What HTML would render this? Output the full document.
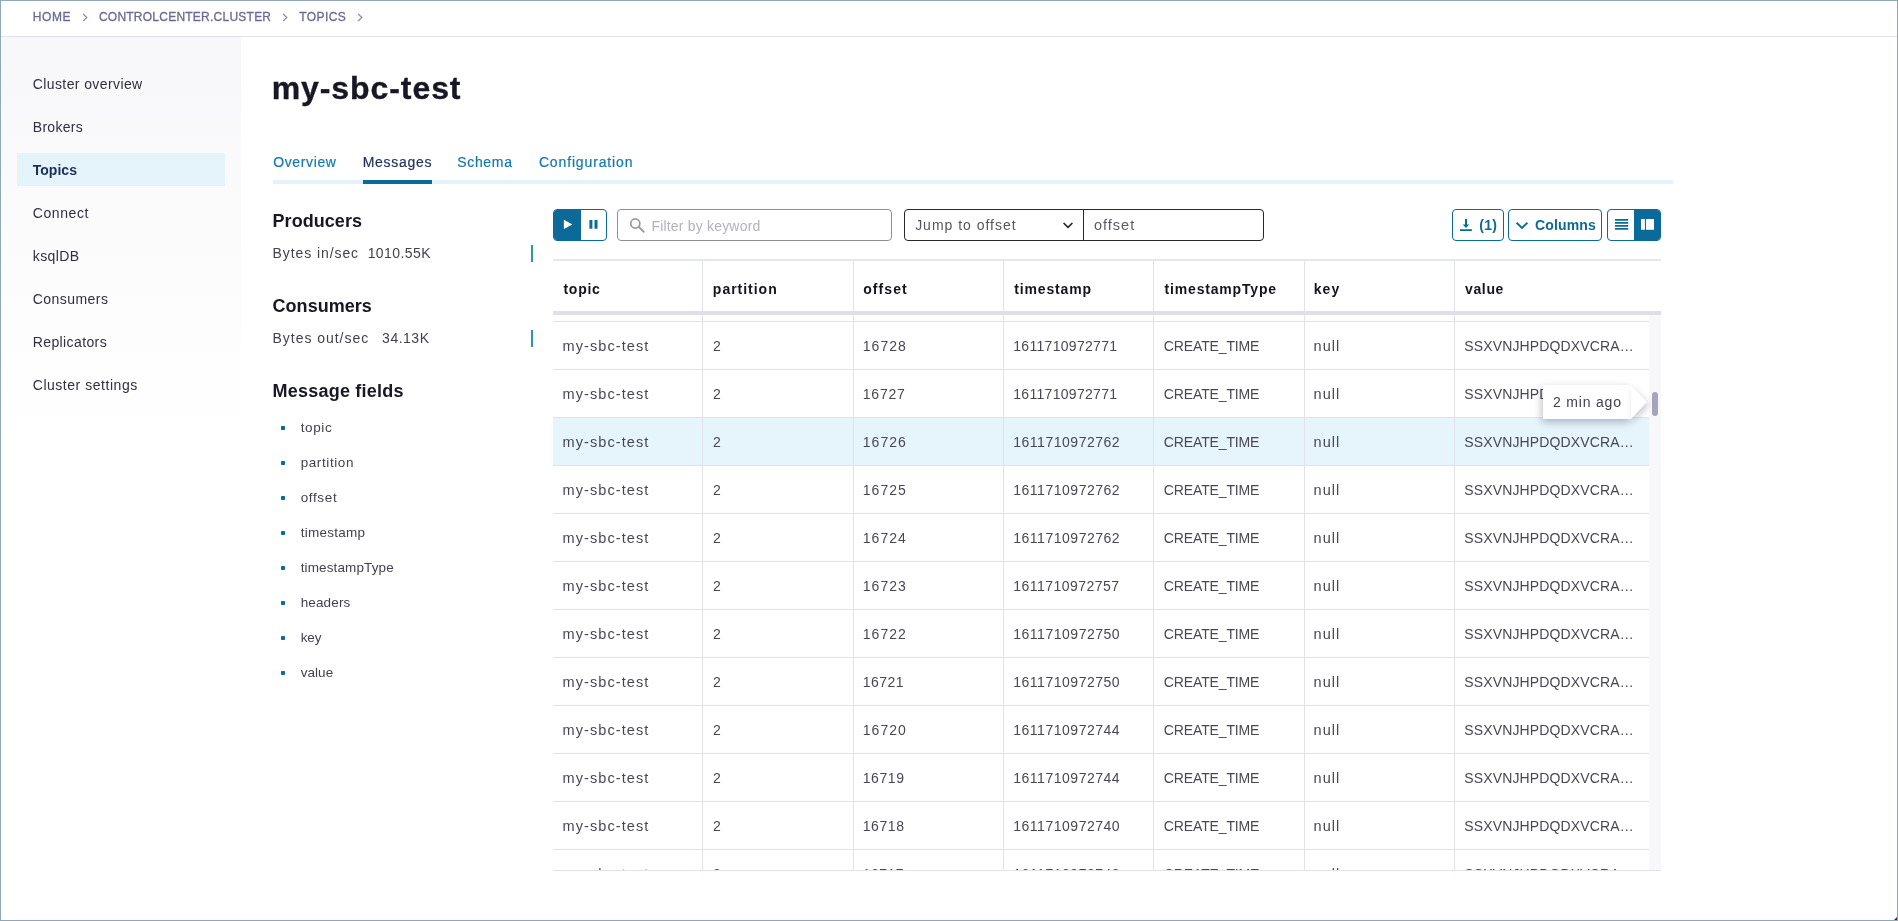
<!DOCTYPE html>
<html lang="en">
<head>
<meta charset="utf-8">
<title>my-sbc-test - Messages</title>
<style>
*{box-sizing:border-box;margin:0;padding:0}
html,body{width:1898px;height:921px;overflow:hidden;background:#fff}
body{font-family:"Liberation Sans",sans-serif;color:#2b2b3a;position:relative;will-change:transform}
.a{position:absolute}
.t{position:absolute;white-space:nowrap}
#frame{position:absolute;left:0;top:0;width:1898px;height:921px;border:1px solid #8fa7b6;z-index:50}
#corner{position:absolute;left:1893.5px;top:916.5px;width:0;height:0;border-left:3.5px solid transparent;border-bottom:3.5px solid #5a2226;z-index:51}
/* breadcrumb */
#crumbline{position:absolute;left:1px;top:36px;width:1896px;height:1px;background:#e2e2ec}
.cr{font-size:12px;line-height:14px;color:#6a6a93;-webkit-text-stroke:.3px #6a6a93}
.chev{position:absolute;top:13px;width:6px;height:9px}
/* sidebar */
#side{position:absolute;left:1px;top:37px;width:240px;height:883px;background:linear-gradient(180deg,#f8f8fa 0,#f8f8fa 30px,#fff 400px)}
#act{position:absolute;left:17px;top:153px;width:208px;height:33px;background:#e5f3fb}
.sd{font-size:14px;line-height:18px;color:#30303f}
#s3{font-weight:bold;color:#1b2f57}
/* title */
#title{font-size:32px;line-height:40px;font-weight:bold;color:#171725;-webkit-text-stroke:.35px #171725}
/* tabs */
.tab{font-size:14px;line-height:18px;color:#127aad;-webkit-text-stroke:.2px currentColor}
#tb2{color:#1f3159}
#tabline{position:absolute;left:273px;top:180px;width:1400px;height:4px;background:#e4f3fb}
#tabact{position:absolute;left:363px;top:180px;width:69px;height:4px;background:#0b6a97}
/* left panel */
.h2{font-size:18px;line-height:22px;font-weight:bold;color:#171725}
.mt{font-size:14px;line-height:18px;color:#42424e}
.spark{position:absolute;left:531px;width:2px;height:17px;background:#2c9aa6}
.fld{font-size:13.5px;line-height:16px;color:#42424e}
.bul{position:absolute;left:280.5px;width:4.5px;height:4.5px;background:#0b6a97;border-radius:.8px}
/* toolbar */
.btn{position:absolute;top:209px;height:32px;border:1px solid #0b6a97;border-radius:4px;background:#fff;overflow:hidden}
.inp{position:absolute;top:209px;height:32px;border:1px solid #8e8e98;border-radius:4px;background:#fff}
.tl{font-size:14px;line-height:18px}
.tlb{font-size:14px;line-height:18px;font-weight:bold;color:#0b6a97}
/* table */
.hline{position:absolute;left:553px;height:1px;background:#e2e2ec}
.vl{position:absolute;top:261px;width:1px;height:609px;background:#e2e2ec;z-index:4}
.th{font-size:14px;line-height:18px;font-weight:bold;color:#14141c;z-index:5}
#tblclip{position:absolute;left:0;top:315px;width:1898px;height:555px;overflow:hidden}
.row{position:absolute;left:553px;width:1096px;height:48px;border-bottom:1px solid #e2e2ec;margin-top:-315px}
.row.hl{background:#e6f4fc}
.row span{position:absolute;font-size:14px;line-height:18px;color:#484854;white-space:nowrap}
#track{position:absolute;left:1649px;top:315px;width:12px;height:555px;background:#f8f8fb}
#thumb{position:absolute;left:1652px;top:392px;width:6px;height:24px;border-radius:3px;background:#a5a5be;z-index:6}
#tip{position:absolute;left:1543px;top:385px;width:88px;height:34px;background:#fff;z-index:7;box-shadow:-1px 3px 8px rgba(0,0,30,.27)}
span.k1,span.k6,#i3{font-size:14.5px}
#tiparrow{position:absolute;left:1631px;top:385px;z-index:8;width:0;height:0;border-top:17px solid transparent;border-bottom:17px solid transparent;border-left:16px solid #fff;filter:drop-shadow(2px 3px 3px rgba(0,0,30,.2))}
#tp{font-size:14px;line-height:18px;color:#42424e;z-index:9}
/* tuned text positions */
#c1{left:32.79px;top:10.00px;letter-spacing:0.609px}
#c2{left:98.92px;top:10.00px;letter-spacing:0.239px}
#c3{left:299.37px;top:10.00px;letter-spacing:0.379px}
#s1{left:32.74px;top:75.00px;letter-spacing:0.401px}
#s2{left:32.74px;top:118.00px;letter-spacing:0.313px}
#s3{left:32.74px;top:161.00px;letter-spacing:0.030px}
#s4{left:32.74px;top:204.00px;letter-spacing:0.605px}
#s5{left:32.74px;top:247.00px;letter-spacing:0.410px}
#s6{left:32.74px;top:290.00px;letter-spacing:0.449px}
#s7{left:32.74px;top:333.00px;letter-spacing:0.390px}
#s8{left:32.74px;top:376.00px;letter-spacing:0.533px}
#title{left:271.71px;top:67.60px;letter-spacing:0.921px}
#tb1{left:273.20px;top:153.00px;letter-spacing:0.635px}
#tb2{left:362.68px;top:153.00px;letter-spacing:0.723px}
#tb3{left:457.29px;top:153.00px;letter-spacing:0.655px}
#tb4{left:538.91px;top:153.00px;letter-spacing:0.856px}
#h1{left:272.55px;top:210.00px;letter-spacing:0.052px}
#h2{left:272.55px;top:295.00px;letter-spacing:0.036px}
#h3{left:272.55px;top:380.00px;letter-spacing:0.219px}
#m1{left:272.55px;top:244.00px;letter-spacing:0.916px}
#m2{left:367.64px;top:244.00px;letter-spacing:0.441px}
#m3{left:272.55px;top:329.00px;letter-spacing:0.968px}
#m4{left:382.10px;top:329.00px;letter-spacing:0.503px}
#f1{left:300.63px;top:420.00px;letter-spacing:0.622px}
#f2{left:300.63px;top:455.00px;letter-spacing:0.598px}
#f3{left:300.63px;top:490.00px;letter-spacing:0.658px}
#f4{left:300.63px;top:525.00px;letter-spacing:0.277px}
#f5{left:300.63px;top:560.00px;letter-spacing:0.127px}
#f6{left:300.63px;top:595.00px;letter-spacing:0.157px}
#f7{left:300.63px;top:630.00px;letter-spacing:-0.098px}
#f8{left:300.63px;top:665.00px;letter-spacing:0.071px}
#i1{left:651.41px;top:217.00px;letter-spacing:0.191px}
#i2{left:915.15px;top:216.00px;letter-spacing:0.982px}
#i3{left:1093.92px;top:216.00px;letter-spacing:1.026px}
#b1{left:1479.16px;top:216.00px;letter-spacing:0.369px}
#b2{left:1535.10px;top:216.00px;letter-spacing:0.145px}
#x1{left:563.38px;top:280.00px;letter-spacing:0.770px}
#x2{left:712.87px;top:280.00px;letter-spacing:0.980px}
#x3{left:863.23px;top:280.00px;letter-spacing:1.081px}
#x4{left:1014.35px;top:280.00px;letter-spacing:0.831px}
#x5{left:1164.54px;top:280.00px;letter-spacing:0.828px}
#x6{left:1313.68px;top:280.00px;letter-spacing:1.129px}
#x7{left:1465.05px;top:280.00px;letter-spacing:0.626px}
.k1{left:9.47px;top:15.00px;letter-spacing:1.101px}
.k2{left:160.07px;top:15.00px;letter-spacing:0.500px}
.k3{left:309.76px;top:15.00px;letter-spacing:1.037px}
.k4{left:460.26px;top:15.00px;letter-spacing:0.301px}
.k5{left:610.84px;top:15.00px;letter-spacing:-0.138px}
.k6{left:760.58px;top:15.00px;letter-spacing:1.031px}
.k7{left:911.20px;top:15.00px;letter-spacing:0.151px}
#tp{left:1552.96px;top:393.00px;letter-spacing:0.812px}
</style>
</head>
<body>
<div id="crumbline"></div>
<div id="side"></div>
<div id="act"></div>

<span class="t cr" id="c1">HOME</span>
<svg class="chev" style="left:81.6px" viewBox="0 0 6 9"><path d="M1.2 1l3.6 3.5L1.2 8" fill="none" stroke="#8a8aae" stroke-width="1.2"/></svg>
<span class="t cr" id="c2">CONTROLCENTER.CLUSTER</span>
<svg class="chev" style="left:281.7px" viewBox="0 0 6 9"><path d="M1.2 1l3.6 3.5L1.2 8" fill="none" stroke="#8a8aae" stroke-width="1.2"/></svg>
<span class="t cr" id="c3">TOPICS</span>
<svg class="chev" style="left:356.6px" viewBox="0 0 6 9"><path d="M1.2 1l3.6 3.5L1.2 8" fill="none" stroke="#8a8aae" stroke-width="1.2"/></svg>

<span class="t sd" id="s1">Cluster overview</span>
<span class="t sd" id="s2">Brokers</span>
<span class="t sd" id="s3">Topics</span>
<span class="t sd" id="s4">Connect</span>
<span class="t sd" id="s5">ksqlDB</span>
<span class="t sd" id="s6">Consumers</span>
<span class="t sd" id="s7">Replicators</span>
<span class="t sd" id="s8">Cluster settings</span>

<h1 class="t" id="title">my-sbc-test</h1>

<span class="t tab" id="tb1">Overview</span>
<span class="t tab" id="tb2">Messages</span>
<span class="t tab" id="tb3">Schema</span>
<span class="t tab" id="tb4">Configuration</span>
<div id="tabline"></div>
<div id="tabact"></div>

<h2 class="t h2" id="h1">Producers</h2>
<span class="t mt" id="m1">Bytes in/sec</span>
<span class="t mt" id="m2">1010.55K</span>
<div class="spark" style="top:245px"></div>
<h2 class="t h2" id="h2">Consumers</h2>
<span class="t mt" id="m3">Bytes out/sec</span>
<span class="t mt" id="m4">34.13K</span>
<div class="spark" style="top:330px"></div>
<h2 class="t h2" id="h3">Message fields</h2>
<div class="bul" style="top:425.5px"></div><span class="t fld" id="f1">topic</span>
<div class="bul" style="top:460.5px"></div><span class="t fld" id="f2">partition</span>
<div class="bul" style="top:495.5px"></div><span class="t fld" id="f3">offset</span>
<div class="bul" style="top:530.5px"></div><span class="t fld" id="f4">timestamp</span>
<div class="bul" style="top:565.5px"></div><span class="t fld" id="f5">timestampType</span>
<div class="bul" style="top:600.5px"></div><span class="t fld" id="f6">headers</span>
<div class="bul" style="top:635.5px"></div><span class="t fld" id="f7">key</span>
<div class="bul" style="top:670.5px"></div><span class="t fld" id="f8">value</span>

<!-- toolbar -->
<div class="btn" style="left:553px;width:54px">
 <div class="a" style="left:-1px;top:-1px;width:28px;height:32px;background:#0b6a97"></div>
</div>
<svg class="a" style="left:553px;top:209px" width="54" height="32" viewBox="0 0 54 32"><path d="M10.9 10.7L19.4 15.4 10.9 20.1z" fill="#fff"/><path d="M36.4 10.9h3v8.9h-3zM41.5 10.9h3v8.9h-3z" fill="#0b6a97"/></svg>
<div class="inp" style="left:617px;width:275px"></div>
<svg class="a" style="left:617px;top:209px" width="40" height="32" viewBox="0 0 40 32"><circle cx="18.3" cy="14.5" r="4.55" fill="none" stroke="#9a9aa2" stroke-width="1.7"/><path d="M21.6 17.8l5.7 5.6" stroke="#9a9aa2" stroke-width="1.9"/></svg>
<span class="t tl" id="i1" style="color:#b2b2ba">Filter by keyword</span>
<div class="inp" style="left:904px;width:181px;border-color:#26262b;border-radius:4px 0 0 4px"></div>
<span class="t tl" id="i2" style="color:#55555f">Jump to offset</span>
<svg class="a" style="left:1062px;top:221px" width="12" height="9" viewBox="0 0 12 9"><path d="M1.6 2l4.4 4.4L10.4 2" fill="none" stroke="#26262b" stroke-width="1.7"/></svg>
<div class="inp" style="left:1083px;width:181px;border-color:#26262b;border-radius:0 4px 4px 0"></div>
<span class="t tl" id="i3" style="color:#5a5a64">offset</span>
<div class="btn" style="left:1452px;width:52px"></div>
<svg class="a" style="left:1459px;top:218px" width="14" height="14" viewBox="0 0 14 14"><path d="M6 .9h2v6H6zM3.7 6.6h6.6L7 9.9zM1 11.3h11.9v1.8H1z" fill="#0b6a97"/></svg>
<span class="t tlb" id="b1">(1)</span>
<div class="btn" style="left:1508px;width:94px"></div>
<svg class="a" style="left:1515px;top:221px" width="14" height="9" viewBox="0 0 14 9"><path d="M1.6 1.7l5.4 5.2 5.4-5.2" fill="none" stroke="#0b6a97" stroke-width="1.9"/></svg>
<span class="t tlb" id="b2">Columns</span>
<div class="btn" style="left:1607px;width:54px">
 <div class="a" style="left:26px;top:-1px;width:28px;height:32px;background:#0b6a97"></div>
</div>
<svg class="a" style="left:1607px;top:209px" width="54" height="32" viewBox="0 0 54 32"><path d="M7.9 10h13.3v1.8H7.9zM7.9 13h13.3v1.8H7.9zM7.9 16h13.3v1.8H7.9zM7.9 19h13.3v1.8H7.9z" fill="#0b6a97"/><path d="M34 10h3.9v10.8H34zM39 10h8v10.8h-8z" fill="#fff"/></svg>

<!-- table -->
<div class="hline" style="top:259px;width:1108px;height:2px;background:#e6e6ee"></div>
<div class="hline" style="top:311px;width:1108px;height:4px;background:#dfdfe7;z-index:5"></div>
<div class="hline" style="top:870px;width:1108px"></div>
<span class="t th" id="x1">topic</span>
<span class="t th" id="x2">partition</span>
<span class="t th" id="x3">offset</span>
<span class="t th" id="x4">timestamp</span>
<span class="t th" id="x5">timestampType</span>
<span class="t th" id="x6">key</span>
<span class="t th" id="x7">value</span>
<div id="track"></div>
<div id="tblclip">
<div class="row" style="top:274px"><span class="k1">my-sbc-test</span><span class="k2">2</span><span class="k3">16729</span><span class="k4">1611710972771</span><span class="k5">CREATE_TIME</span><span class="k6">null</span><span class="k7">SSXVNJHPDQDXVCRA…</span></div>
<div class="row" id="r1" style="top:322px"><span class="k1">my-sbc-test</span><span class="k2">2</span><span class="k3">16728</span><span class="k4">1611710972771</span><span class="k5">CREATE_TIME</span><span class="k6">null</span><span class="k7">SSXVNJHPDQDXVCRA…</span></div>
<div class="row" style="top:370px"><span class="k1">my-sbc-test</span><span class="k2">2</span><span class="k3" style="letter-spacing:0.787px">16727</span><span class="k4">1611710972771</span><span class="k5">CREATE_TIME</span><span class="k6">null</span><span class="k7">SSXVNJHPDQDXVCRA…</span></div>
<div class="row hl" style="top:418px"><span class="k1">my-sbc-test</span><span class="k2">2</span><span class="k3">16726</span><span class="k4" style="letter-spacing:0.518px">1611710972762</span><span class="k5">CREATE_TIME</span><span class="k6">null</span><span class="k7">SSXVNJHPDQDXVCRA…</span></div>
<div class="row" style="top:466px"><span class="k1">my-sbc-test</span><span class="k2">2</span><span class="k3">16725</span><span class="k4" style="letter-spacing:0.518px">1611710972762</span><span class="k5">CREATE_TIME</span><span class="k6">null</span><span class="k7">SSXVNJHPDQDXVCRA…</span></div>
<div class="row" style="top:514px"><span class="k1">my-sbc-test</span><span class="k2">2</span><span class="k3">16724</span><span class="k4" style="letter-spacing:0.518px">1611710972762</span><span class="k5">CREATE_TIME</span><span class="k6">null</span><span class="k7">SSXVNJHPDQDXVCRA…</span></div>
<div class="row" style="top:562px"><span class="k1">my-sbc-test</span><span class="k2">2</span><span class="k3">16723</span><span class="k4" style="letter-spacing:0.468px">1611710972757</span><span class="k5">CREATE_TIME</span><span class="k6">null</span><span class="k7">SSXVNJHPDQDXVCRA…</span></div>
<div class="row" style="top:610px"><span class="k1">my-sbc-test</span><span class="k2">2</span><span class="k3">16722</span><span class="k4" style="letter-spacing:0.518px">1611710972750</span><span class="k5">CREATE_TIME</span><span class="k6">null</span><span class="k7">SSXVNJHPDQDXVCRA…</span></div>
<div class="row" style="top:658px"><span class="k1">my-sbc-test</span><span class="k2">2</span><span class="k3" style="letter-spacing:0.437px">16721</span><span class="k4" style="letter-spacing:0.518px">1611710972750</span><span class="k5">CREATE_TIME</span><span class="k6">null</span><span class="k7">SSXVNJHPDQDXVCRA…</span></div>
<div class="row" style="top:706px"><span class="k1">my-sbc-test</span><span class="k2">2</span><span class="k3">16720</span><span class="k4" style="letter-spacing:0.518px">1611710972744</span><span class="k5">CREATE_TIME</span><span class="k6">null</span><span class="k7">SSXVNJHPDQDXVCRA…</span></div>
<div class="row" style="top:754px"><span class="k1">my-sbc-test</span><span class="k2">2</span><span class="k3" style="letter-spacing:0.587px">16719</span><span class="k4" style="letter-spacing:0.518px">1611710972744</span><span class="k5">CREATE_TIME</span><span class="k6">null</span><span class="k7">SSXVNJHPDQDXVCRA…</span></div>
<div class="row" style="top:802px"><span class="k1">my-sbc-test</span><span class="k2">2</span><span class="k3" style="letter-spacing:0.587px">16718</span><span class="k4" style="letter-spacing:0.518px">1611710972740</span><span class="k5">CREATE_TIME</span><span class="k6">null</span><span class="k7">SSXVNJHPDQDXVCRA…</span></div>
<div class="row" style="top:850px"><span class="k1">my-sbc-test</span><span class="k2">2</span><span class="k3" style="letter-spacing:0.487px">16717</span><span class="k4" style="letter-spacing:0.518px">1611710972740</span><span class="k5">CREATE_TIME</span><span class="k6">null</span><span class="k7">SSXVNJHPDQDXVCRA…</span></div>
</div>
<div class="vl" style="left:702px"></div>
<div class="vl" style="left:853px"></div>
<div class="vl" style="left:1003px"></div>
<div class="vl" style="left:1153px"></div>
<div class="vl" style="left:1304px"></div>
<div class="vl" style="left:1454px"></div>
<div id="thumb"></div>
<div id="tip"></div>
<div id="tiparrow"></div>
<span class="t" id="tp">2 min ago</span>

<div id="frame"></div>
<div id="corner"></div>
</body>
</html>
